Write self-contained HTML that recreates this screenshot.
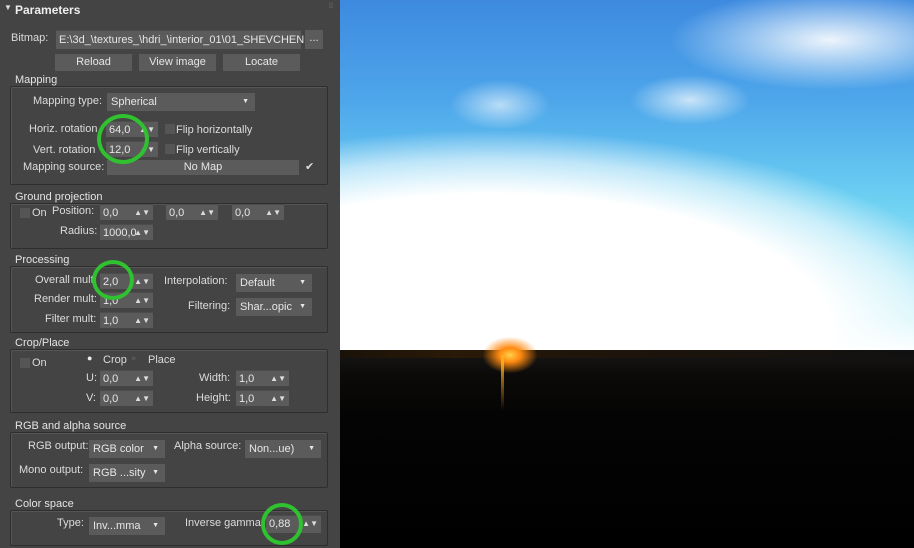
<!DOCTYPE html>
<html><head><meta charset="utf-8"><style>
*{margin:0;padding:0;box-sizing:border-box}
body{width:914px;height:548px;overflow:hidden;background:#444;font-family:"Liberation Sans",sans-serif;font-size:11px;color:#dcdcdc;position:relative}
.a{position:absolute;white-space:nowrap}
.f{position:absolute;background:#5b5b5b;height:16px;line-height:16px;padding-left:3px;color:#e6e6e6;border-top:1px solid #4c4c4c}
.f .s{position:absolute;right:3px;top:0;font-size:8px;color:#ddd}
.d{position:absolute;background:#5b5b5b;height:18px;line-height:18px;padding-left:4px;color:#e6e6e6}
.d:after{content:"▼";position:absolute;right:6px;top:0;font-size:7px}
.b{position:absolute;background:#5b5b5b;height:17px;line-height:17px;text-align:center;color:#e6e6e6}
.g{position:absolute;border:1px solid #2e2e2e;box-shadow:inset 1px 1px 0 #555;border-radius:2px}
.gt{position:absolute;background:#444;padding:0 2px;color:#e4e4e4}
.cb{position:absolute;width:10px;height:10px;background:#555}
.c{position:absolute;border:4px solid #2fc12f;border-radius:50%}
#img{position:absolute;left:340px;top:0;width:574px;height:548px;overflow:hidden;
background:
radial-gradient(ellipse 500px 200px at 150px 330px,#fff 0,#fff 68%,rgba(255,255,255,.6) 85%,rgba(255,255,255,0) 100%),
radial-gradient(ellipse 160px 50px at 490px 40px,rgba(255,255,255,.9),rgba(255,255,255,0)),
radial-gradient(ellipse 50px 25px at 160px 105px,rgba(255,255,255,.6),rgba(255,255,255,0)),
radial-gradient(ellipse 60px 25px at 350px 100px,rgba(255,255,255,.7),rgba(255,255,255,0)),
linear-gradient(#3d8ae0 0,#4ea6ea 100px,#6cd0f2 200px,#b6eef8 320px,#fff 355px);}
#ground{position:absolute;left:0;top:356px;width:574px;height:192px;background:linear-gradient(#141414 0,#0c0a08 20px,#040404 60px,#000 100%)}
</style></head><body>
<div class="a" style="left:4px;top:3px;font-size:8px">▼</div>
<div class="a" style="left:15px;top:3px;font-weight:bold;font-size:12px;color:#eee">Parameters</div>
<div class="a" style="left:329px;top:3px;font-size:7px;color:#888">⁞⁞</div>
<div class="a" style="left:11px;top:32px">Bitmap:</div>
<div class="f" style="left:56px;top:30px;width:245px;height:19px;line-height:18px">E:\3d_\textures_\hdri_\interior_01\01_SHEVCHEN</div>
<div class="b" style="left:305px;top:30px;width:18px;height:19px">...</div>
<div class="b" style="left:55px;top:54px;width:77px">Reload</div>
<div class="b" style="left:139px;top:54px;width:77px">View image</div>
<div class="b" style="left:223px;top:54px;width:77px">Locate</div>

<div class="g" style="left:10px;top:86px;width:318px;height:99px"></div><div class="gt" style="left:13px;top:74px">Mapping</div>
<div class="a" style="left:33px;top:95px">Mapping type:</div>
<div class="d" style="left:107px;top:93px;width:148px">Spherical</div>
<div class="a" style="left:29px;top:123px">Horiz. rotation</div>
<div class="f" style="left:106px;top:121px;width:52px">64,0<span class="s">▲▼</span></div>
<div class="cb" style="left:165px;top:124px"></div><div class="a" style="left:176px;top:124px">Flip horizontally</div>
<div class="a" style="left:33px;top:144px">Vert. rotation</div>
<div class="f" style="left:106px;top:141px;width:52px">12,0<span class="s">▲▼</span></div>
<div class="cb" style="left:165px;top:144px"></div><div class="a" style="left:176px;top:144px">Flip vertically</div>
<div class="a" style="left:23px;top:161px">Mapping source:</div>
<div class="b" style="left:107px;top:160px;width:192px;height:15px;line-height:15px">No Map</div>
<div class="a" style="left:305px;top:160px">✔</div>

<div class="g" style="left:10px;top:203px;width:318px;height:46px"></div><div class="gt" style="left:13px;top:191px">Ground projection</div>
<div class="cb" style="left:20px;top:208px"></div><div class="a" style="left:32px;top:207px">On</div>
<div class="a" style="left:52px;top:205px">Position:</div>
<div class="f" style="left:100px;top:204px;width:53px">0,0<span class="s">▲▼</span></div>
<div class="f" style="left:166px;top:204px;width:52px">0,0<span class="s">▲▼</span></div>
<div class="f" style="left:232px;top:204px;width:52px">0,0<span class="s">▲▼</span></div>
<div class="a" style="left:60px;top:225px">Radius:</div>
<div class="f" style="left:100px;top:224px;width:53px">1000,0<span class="s">▲▼</span></div>

<div class="g" style="left:10px;top:266px;width:318px;height:67px"></div><div class="gt" style="left:13px;top:254px">Processing</div>
<div class="a" style="left:35px;top:274px">Overall mult</div>
<div class="f" style="left:100px;top:273px;width:53px">2,0<span class="s">▲▼</span></div>
<div class="a" style="left:34px;top:293px">Render mult:</div>
<div class="f" style="left:100px;top:292px;width:53px">1,0<span class="s">▲▼</span></div>
<div class="a" style="left:45px;top:313px">Filter mult:</div>
<div class="f" style="left:100px;top:312px;width:53px">1,0<span class="s">▲▼</span></div>
<div class="a" style="left:164px;top:275px">Interpolation:</div>
<div class="d" style="left:236px;top:274px;width:76px">Default</div>
<div class="a" style="left:188px;top:300px">Filtering:</div>
<div class="d" style="left:236px;top:298px;width:76px">Shar...opic</div>

<div class="g" style="left:10px;top:349px;width:318px;height:64px"></div><div class="gt" style="left:13px;top:337px">Crop/Place</div>
<div class="cb" style="left:20px;top:358px"></div><div class="a" style="left:32px;top:357px">On</div>
<div class="a" style="left:87px;top:353px;color:#eee;font-size:9px">●</div><div class="a" style="left:103px;top:354px">Crop</div>
<div class="a" style="left:131px;top:353px;color:#555;font-size:9px">●</div><div class="a" style="left:148px;top:354px">Place</div>
<div class="a" style="left:86px;top:372px">U:</div>
<div class="f" style="left:100px;top:370px;width:53px">0,0<span class="s">▲▼</span></div>
<div class="a" style="left:86px;top:392px">V:</div>
<div class="f" style="left:100px;top:390px;width:53px">0,0<span class="s">▲▼</span></div>
<div class="a" style="left:199px;top:372px">Width:</div>
<div class="f" style="left:236px;top:370px;width:53px">1,0<span class="s">▲▼</span></div>
<div class="a" style="left:196px;top:392px">Height:</div>
<div class="f" style="left:236px;top:390px;width:53px">1,0<span class="s">▲▼</span></div>

<div class="g" style="left:10px;top:432px;width:318px;height:56px"></div><div class="gt" style="left:13px;top:420px">RGB and alpha source</div>
<div class="a" style="left:28px;top:440px">RGB output:</div>
<div class="d" style="left:89px;top:440px;width:76px">RGB color</div>
<div class="a" style="left:174px;top:440px">Alpha source:</div>
<div class="d" style="left:245px;top:440px;width:76px">Non...ue)</div>
<div class="a" style="left:19px;top:464px">Mono output:</div>
<div class="d" style="left:89px;top:464px;width:76px">RGB ...sity</div>

<div class="g" style="left:10px;top:510px;width:318px;height:36px"></div><div class="gt" style="left:13px;top:498px">Color space</div>
<div class="a" style="left:57px;top:517px">Type:</div>
<div class="d" style="left:89px;top:517px;width:76px">Inv...mma</div>
<div class="a" style="left:185px;top:517px">Inverse gamma:</div>
<div class="f" style="left:266px;top:515px;width:55px;height:18px">0,88<span class="s">▲▼</span></div>

<div class="c" style="left:97px;top:114px;width:52px;height:50px"></div>
<div class="c" style="left:92px;top:260px;width:42px;height:40px"></div>
<div class="c" style="left:261px;top:503px;width:42px;height:42px"></div>

<div id="img">
<div id="ground"></div>
<div style="position:absolute;left:0;top:350px;width:574px;height:8px;background:linear-gradient(90deg,#1a1208,#2a1a08 20%,#20150a 40%,#111 100%)"></div>
<div style="position:absolute;left:140px;top:335px;width:60px;height:40px;background:radial-gradient(ellipse at center,#ffd04a 0,#ff8a10 25%,rgba(255,120,0,0) 65%)"></div>
<div style="position:absolute;left:161px;top:355px;width:3px;height:55px;background:linear-gradient(#ffb020,rgba(255,100,0,0))"></div>
</div>
</body></html>
